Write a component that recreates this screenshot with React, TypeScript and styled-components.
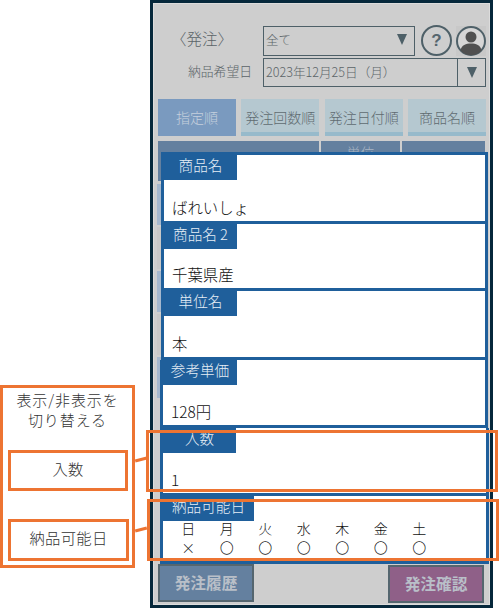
import React from 'react';
import styled, { createGlobalStyle } from 'styled-components';

const font = '"Noto Sans CJK JP", "Noto Sans", sans-serif';
const orange = '#ed7432';
const navy = '#1f5f9b';
const slate = '#4e6068';

const GlobalStyle = createGlobalStyle`
  html, body {
    margin: 0;
    padding: 0;
    background: #fff;
  }
  body {
    font-family: ${font};
    font-weight: 300;
  }
`;

const Canvas = styled.div`
  position: relative;
  width: 499px;
  height: 608px;
  overflow: hidden;
  background: #fff;
`;

const Phone = styled.div`
  position: relative;
  box-sizing: border-box;
  margin-left: 150px;
  width: 343px;
  height: 608px;
  display: flex;
  flex-direction: column;
  padding: 22px 4px 0 5px;
  background: #cecece;
  border: 3px solid #06283b;
  box-shadow: inset 0 0 0 1px #dcdcdc;
`;

const TopRow = styled.div`
  display: grid;
  grid-template-columns: 105px 152px 42px 1fr;
  height: 30px;
  align-items: center;
`;

const DateRow = styled.div`
  display: grid;
  grid-template-columns: 105px 1fr;
  height: 29px;
  margin-top: 3px;
  align-items: center;
`;

const PageTitle = styled.div`
  font-size: 15.5px;
  color: #5b6468;
  padding-right: 17px;
  padding-bottom: 5px;
  text-align: center;
  white-space: nowrap;
`;

const FieldLabel = styled.div`
  font-size: 12.8px;
  color: #5b6468;
  padding-right: 11px;
  padding-bottom: 4px;
  text-align: right;
`;

const SelectBox = styled.div`
  box-sizing: border-box;
  height: 30px;
  display: flex;
  align-items: center;
  justify-content: space-between;
  padding: 0 7px 2px 2px;
  border: 1px solid ${slate};
  font-size: 12.5px;
  color: #5b6468;
`;

const DateBox = styled.div`
  box-sizing: border-box;
  height: 29px;
  display: flex;
  align-items: center;
  border: 1px solid ${slate};
  font-size: 12.6px;
  color: #5b6468;
`;

const DateText = styled.span`
  flex: 1;
  padding-left: 2px;
  padding-bottom: 3px;
`;

const DateButton = styled.div`
  width: 27px;
  height: 100%;
  display: flex;
  align-items: center;
  justify-content: center;
  border-left: 1px solid ${slate};
`;

const Triangle = styled.span`
  width: 0;
  height: 0;
  border-left: 5.5px solid transparent;
  border-right: 5.5px solid transparent;
  border-top: 11px solid ${slate};
`;

const HelpCircle = styled.div`
  box-sizing: border-box;
  width: 31px;
  height: 31px;
  margin-left: 6px;
  border: 2px solid ${slate};
  border-radius: 50%;
  display: flex;
  align-items: center;
  justify-content: center;
  font-family: "Liberation Sans", sans-serif;
  font-size: 17px;
  font-weight: 700;
  color: #56666e;
`;

const AvatarIcon = styled.svg`
  display: block;
  width: 30px;
  height: 30px;
  margin-left: -1px;
`;

const Tabs = styled.div`
  display: grid;
  grid-template-columns: repeat(4, 78px);
  justify-content: space-between;
  margin-top: 12px;
  height: 37px;
`;

const Tab = styled.div<{ $active?: boolean }>`
  box-sizing: border-box;
  display: flex;
  align-items: center;
  justify-content: center;
  padding-bottom: 2px;
  font-size: 14px;
  white-space: nowrap;
  background: ${(p) => (p.$active ? '#7a9abf' : '#b5c8d0')};
  color: ${(p) => (p.$active ? '#c5d0dd' : '#5f6b70')};
  box-shadow: ${(p) => (p.$active ? 'none' : 'inset 0 -4px 0 #97bacb')};
`;

const TableHead = styled.div`
  display: grid;
  grid-template-columns: 161px 79px 83px;
  gap: 2px;
  margin-top: 5px;
  height: 40px;
`;

const HeadCell = styled.div`
  padding-top: 1px;
  background: #64809f;
  color: #a8b5c4;
  font-size: 14px;
  text-align: center;
`;

const ListBehind = styled.div`
  display: flex;
  flex-direction: column;
  gap: 2px;
  margin: 3px 0 0 -1px;
`;

const ListRow = styled.div<{ $tint?: boolean }>`
  height: 41.3px;
  background: ${(p) => (p.$tint ? '#a5b8ce' : '#c8c8c8')};
`;

const Footer = styled.div`
  display: flex;
  justify-content: space-between;
  margin-top: auto;
  margin-bottom: 2px;
  padding-right: 2px;
  height: 39px;
`;

const FooterButton = styled.div<{ $confirm?: boolean }>`
  box-sizing: border-box;
  width: 96px;
  height: 38px;
  align-self: ${(p) => (p.$confirm ? 'flex-end' : 'flex-start')};
  display: flex;
  align-items: center;
  justify-content: center;
  padding-bottom: 2px;
  border: 2px solid #55666f;
  background: ${(p) => (p.$confirm ? '#8f6088' : '#64809f')};
  color: #b9bfc8;
  font-size: 15.7px;
  font-weight: 700;
`;

const CardStack = styled.div`
  position: absolute;
  top: 149px;
  left: 8px;
  width: 327px;
  display: flex;
  flex-direction: column;
`;

const Card = styled.div<{ $h: number; $first?: boolean; $outL?: boolean; $outR?: boolean }>`
  box-sizing: border-box;
  height: ${(p) => p.$h}px;
  display: flex;
  flex-direction: column;
  align-items: flex-start;
  background: #fff;
  border: 3px solid ${navy};
  border-top-width: ${(p) => (p.$first ? 3 : 0)}px;
  margin-left: ${(p) => (p.$outL ? -1 : 0)}px;
  margin-right: ${(p) => (p.$outR ? -1 : 0)}px;
`;

const CardLabel = styled.div<{ $w?: number }>`
  box-sizing: border-box;
  width: ${(p) => p.$w ?? 73}px;
  height: 25px;
  padding-bottom: 6px;
  display: flex;
  align-items: center;
  justify-content: center;
  background: ${navy};
  color: #e6eef6;
  font-size: 14.6px;
  white-space: nowrap;
`;

const CardValue = styled.div`
  margin-top: auto;
  padding: 0 0 4px 8px;
  font-size: 15.4px;
  line-height: 20px;
  color: #111;
`;

const Week = styled.div`
  display: grid;
  grid-template-columns: repeat(7, 38.5px);
  padding-left: 6px;
  margin-top: -2px;
  font-size: 14px;
  line-height: 19px;
  color: #111;
  text-align: center;
`;

const Legend = styled.div`
  position: absolute;
  left: 0;
  top: 385px;
  box-sizing: border-box;
  width: 135px;
  height: 183px;
  border: 3px solid ${orange};
  padding-top: 2px;
  font-size: 15px;
  line-height: 19.5px;
  letter-spacing: 0.9px;
  color: #333;
  text-align: center;
`;

const LegendBox = styled.div<{ $top: number; $w: number; $h: number }>`
  position: absolute;
  left: 5px;
  top: ${(p) => p.$top}px;
  box-sizing: border-box;
  width: ${(p) => p.$w}px;
  height: ${(p) => p.$h}px;
  display: flex;
  align-items: center;
  justify-content: center;
  padding-bottom: 4px;
  border: 3px solid ${orange};
  background: #fff;
  font-size: 15.3px;
  letter-spacing: 0.3px;
  color: #333;
`;

const Highlight = styled.div<{ $left: number; $top: number }>`
  position: absolute;
  left: ${(p) => p.$left}px;
  top: ${(p) => p.$top}px;
  box-sizing: border-box;
  width: 352px;
  height: 62px;
  border: 3px solid ${orange};
`;

const Connector = styled.div<{ $top: number }>`
  position: absolute;
  left: 135px;
  top: ${(p) => p.$top}px;
  width: 12px;
  height: 3px;
  background: ${orange};
  transform: rotate(-14deg);
`;

const days = ['日', '月', '火', '水', '木', '金', '土'];
const marks = ['×', '〇', '〇', '〇', '〇', '〇', '〇'];

const App: React.FC = () => {
  return (
    <Canvas>
      <GlobalStyle />
      <Phone>
        <TopRow>
          <PageTitle>〈発注〉</PageTitle>
          <SelectBox>
            全て
            <Triangle />
          </SelectBox>
          <HelpCircle>?</HelpCircle>
          <AvatarIcon viewBox="0 0 30 30">
            <rect width="30" height="30" fill="#c8c8c8" />
            <circle cx="15" cy="15" r="14" fill="#d6d6d6" stroke={slate} strokeWidth="2" />
            <circle cx="15" cy="11" r="5.5" fill="#505050" />
            <path d="M4.5 24.5 C5.5 19 10 17.5 15 17.5 C20 17.5 24.5 19 25.5 24.5 A14 14 0 0 1 4.5 24.5 Z" fill="#505050" />
          </AvatarIcon>
        </TopRow>
        <DateRow>
          <FieldLabel>納品希望日</FieldLabel>
          <DateBox>
            <DateText>2023年12月25日（月）</DateText>
            <DateButton>
              <Triangle />
            </DateButton>
          </DateBox>
        </DateRow>
        <Tabs>
          <Tab $active>指定順</Tab>
          <Tab>発注回数順</Tab>
          <Tab>発注日付順</Tab>
          <Tab>商品名順</Tab>
        </Tabs>
        <TableHead>
          <HeadCell />
          <HeadCell>単位</HeadCell>
          <HeadCell />
        </TableHead>
        <ListBehind>
          <ListRow $tint />
          <ListRow />
          <ListRow $tint />
          <ListRow />
          <ListRow $tint />
        </ListBehind>
        <Footer>
          <FooterButton>発注履歴</FooterButton>
          <FooterButton $confirm>発注確認</FooterButton>
        </Footer>
        <CardStack>
          <Card $h={72} $first>
            <CardLabel>商品名</CardLabel>
            <CardValue>ばれいしょ</CardValue>
          </Card>
          <Card $h={67}>
            <CardLabel>商品名 2</CardLabel>
            <CardValue>千葉県産</CardValue>
          </Card>
          <Card $h={69}>
            <CardLabel>単位名</CardLabel>
            <CardValue>本</CardValue>
          </Card>
          <Card $h={68} $outL>
            <CardLabel $w={74}>参考単価</CardLabel>
            <CardValue>128円</CardValue>
          </Card>
          <Card $h={68} $outL $outR>
            <CardLabel>入数</CardLabel>
            <CardValue>1</CardValue>
          </Card>
          <Card $h={68} $outL $outR>
            <CardLabel $w={91}>納品可能日</CardLabel>
            <Week>
              {days.map((d) => (
                <span key={d}>{d}</span>
              ))}
              {marks.map((m, i) => (
                <span key={i}>{m}</span>
              ))}
            </Week>
          </Card>
        </CardStack>
      </Phone>
      <Legend>
        表示/非表示を
        <br />
        切り替える
        <LegendBox $top={62} $w={120} $h={41}>入数</LegendBox>
        <LegendBox $top={131} $w={121} $h={42}>納品可能日</LegendBox>
      </Legend>
      <Connector $top={458} />
      <Connector $top={528} />
      <Highlight $left={146} $top={430} />
      <Highlight $left={147} $top={499} />
    </Canvas>
  );
};

export default App;
